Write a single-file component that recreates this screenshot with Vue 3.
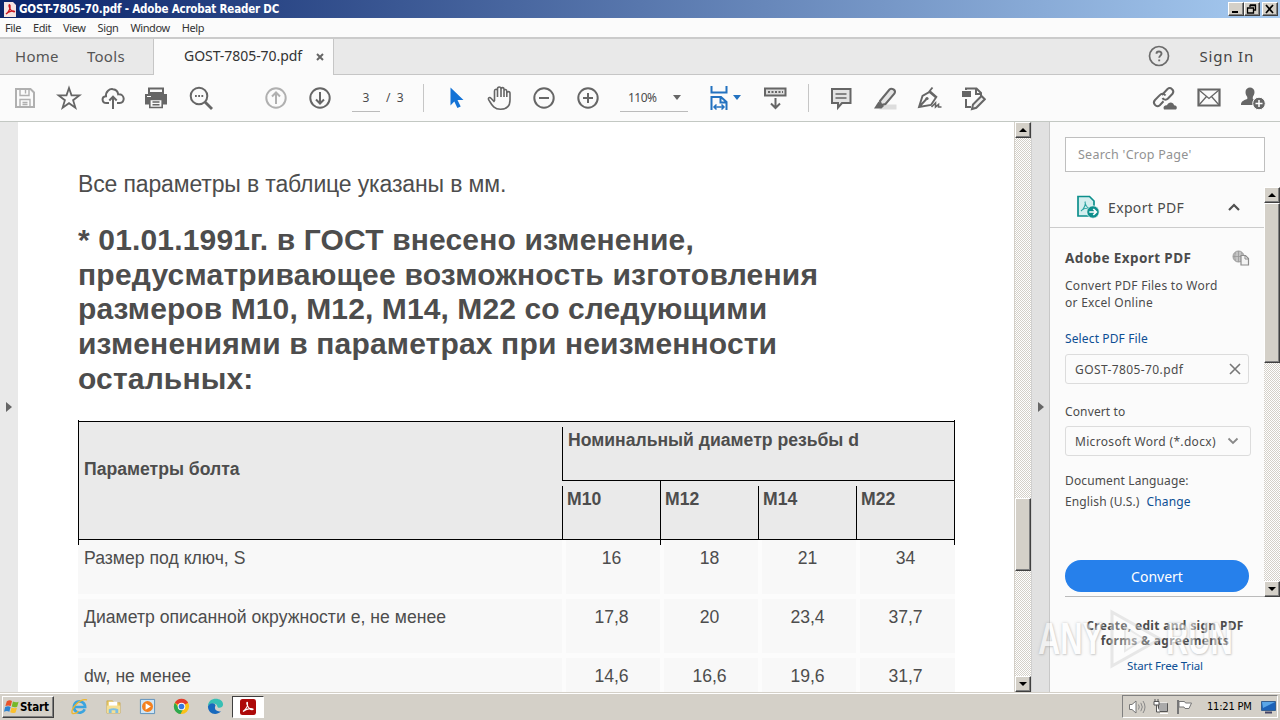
<script setup>
    import { ref } from 'vue'

    const menus = ['File', 'Edit', 'View', 'Sign', 'Window', 'Help'];
    const sizes = ['М10', 'М12', 'М14', 'М22'];
    const rows = [
        { name: 'Размер под ключ, S', values: ['16', '18', '21', '34'] },
        { name: 'Диаметр описанной окружности e, не менее', values: ['17,8', '20', '23,4', '37,7'] },
        { name: 'dw, не менее', values: ['14,6', '16,6', '19,6', '31,7'] },
    ];
    const headingLines = [
        '* 01.01.1991г. в ГОСТ внесено изменение,',
        'предусматривающее возможность изготовления',
        'размеров М10, М12, М14, М22 со следующими',
        'изменениями в параметрах при неизменности',
        'остальных:',
    ];
    const fileName = ref('GOST-7805-70.pdf');
</script>

<template>
    <div class="screen">
        <!-- title bar -->
        <header class="titlebar">
            <svg class="title-icon" width="12" height="15" viewBox="0 0 12 15">
                <path d="M0 0h9l3 3v12H0z" fill="#f4e4e2" />
                <path d="M2 12C5 10 6.500 6 6 3.500C5.500 2 4.500 3 5.300 5C6.200 8 8.500 10 10.500 9.700C11 8.500 5 8.500 2 12z" fill="none" stroke="#c8141c" stroke-width="1.300" />
            </svg>
            <span class="title-text">{{ fileName }} - Adobe Acrobat Reader DC</span>
            <div class="window-buttons">
                <button class="bevel win"><svg width="12" height="10" viewBox="0 0 12 10"><path d="M2 8h6" stroke="#000" stroke-width="2" /></svg></button>
                <button class="bevel win"><svg width="12" height="10" viewBox="0 0 12 10"><path d="M4 3V1.500h5.500V6H8M4 1h6M1.500 4h6v5h-6zM1 4h7" fill="none" stroke="#000" stroke-width="1.300" /></svg></button>
                <button class="bevel win close"><svg width="12" height="10" viewBox="0 0 12 10"><path d="M2 1l7 8M9 1L2 9" stroke="#000" stroke-width="1.700" /></svg></button>
            </div>
        </header>

        <nav class="menubar">
            <span v-for="m in menus" :key="m">{{ m }}</span>
        </nav>

        <div class="tabs">
            <div class="tabs-left">
                <span class="tab-home">Home</span>
                <span class="tab-tools">Tools</span>
            </div>
            <div class="tab-active">
                <span class="tab-name">{{ fileName }}</span>
                <svg width="8" height="8" viewBox="0 0 8 8"><path d="M1 1l6 6M7 1L1 7" stroke="#666" stroke-width="2" /></svg>
            </div>
            <div class="tabs-right">
                <svg width="22" height="22" viewBox="0 0 22 22">
                    <circle cx="11" cy="11" r="9.500" fill="none" stroke="#6b6b6b" stroke-width="1.700" />
                    <path d="M8.500 8.800C8.500 5.600 13.500 5.700 13.500 8.700C13.500 10.600 11.200 10.700 11.200 12.800M11.200 14.400v1.800" fill="none" stroke="#6b6b6b" stroke-width="1.900" />
                </svg>
                <span class="sign-in">Sign In</span>
            </div>
        </div>

        <!-- toolbar -->
        <div class="toolbar">
            <div class="tool"><svg viewBox="0 0 26 26" class="dim">
                <path d="M4 4h14.500L22 7.500V22H4z" /><path d="M8 4v6.500h9V4M13.500 5v3.500M8 22v-7.500h10V22M10.500 17.500h5M10.500 19.500h5" stroke-width="1.400" />
            </svg></div>
            <div class="tool"><svg viewBox="0 0 26 26"><path d="M13 3l2.500 7.300 7.900.1-6.300 4.800 2.300 7.500-6.400-4.500L6.600 22.700l2.300-7.500-6.300-4.800 7.900-.1z" stroke-width="1.800" /></svg></div>
            <div class="tool"><svg viewBox="0 0 26 26">
                <path d="M9 18H6.500C1.500 18 1.200 11.600 6 11.300C5.600 6.300 9.500 3.600 13 4.200C16.200 4.600 17.800 6.500 18.200 9.300C25.200 8.700 25.300 18 19.700 18H17" /><path d="M13 24V12M9.300 15.500L13 11.700l3.700 3.800" />
            </svg></div>
            <div class="tool"><svg viewBox="0 0 26 26" class="shift-left">
                <path d="M6 3.500h14V8H6z" /><path d="M2 9h22v10.500h-4V15H6v4.500H2z" fill="#666" stroke="none" /><path d="M6.800 14.500h12.400V22.500H6.800zM9.500 17h7M9.500 19.700h7" stroke-width="1.600" /><path d="M4 11.500h4" stroke="#fff" stroke-width="1" />
            </svg></div>
            <div class="tool"><svg viewBox="0 0 26 26"><circle cx="11" cy="11" r="8.300" /><path d="M17 17l7 7" stroke-width="2.800" /><path d="M7 11h1.800M10.200 11H12M13.400 11h1.800" /></svg></div>

            <div class="tool after-search"><svg viewBox="0 0 26 26" class="dim"><circle cx="13" cy="13" r="9.700" /><path d="M13 19V7.500M9 11.500l4-4 4 4" /></svg></div>
            <div class="tool"><svg viewBox="0 0 26 26"><circle cx="13" cy="13" r="9.700" /><path d="M13 7v11.500M9 14.500l4 4 4-4" /></svg></div>
            <div class="page-field">3</div>
            <div class="page-total">/&nbsp; 3</div>
            <i class="divider"></i>

            <div class="tool"><svg viewBox="0 0 26 26"><path d="M7.500 2.500l13 12.500h-6l3.200 6.600-3.300 1.400-3.100-6.500-3.800 4z" fill="#1473d6" stroke="none" /></svg></div>
            <div class="tool"><svg viewBox="0 0 26 26">
                <path d="M7.500 17L4 13.300C2.300 11.500.6 13 2 15.300C4.500 19.300 6.500 24.300 13.500 24.300C20.500 24.300 23 21 23 15V8.500C23 6 19.800 6 19.800 8.500V12M7.500 16V6C7.500 3.700 10.500 3.700 10.500 6V12M10.500 11V4C10.500 1.300 14 1.300 14 4V12M14 11V4.500C14 2 17 2 17 4.500V12M17 11V6C17 3.800 19.800 4 19.800 6.500V12" stroke-width="1.600" />
            </svg></div>
            <div class="tool"><svg viewBox="0 0 26 26"><circle cx="13" cy="13" r="9.700" /><path d="M8 13h10" /></svg></div>
            <div class="tool"><svg viewBox="0 0 26 26"><circle cx="13" cy="13" r="9.700" /><path d="M8 13h10M13 8v10" /></svg></div>
            <div class="zoom-field"><span>110%</span><i class="caret"></i></div>
            <div class="fit">
                <svg viewBox="0 0 18 26"><path d="M1.500 1v6.500h15V1M1.500 25V12h9.500l5.500 5v8M10.500 12v5.500h6" /><path d="M4 22h10M6.500 19.500L4 22l2.500 2.500M11.500 19.500L14 22l-2.500 2.500" stroke-width="1.500" /></svg>
                <i class="caret blue"></i>
            </div>
            <div class="tool after-fit"><svg viewBox="0 0 26 26"><path d="M3 3.500h20.500v7H3z" fill="#ddd" /><path d="M6 7h15" stroke-dasharray="2 1.500" stroke-width="1.800" /><path d="M13.500 13v10M9 18.500l4.500 4.500 4.500-4.500" /></svg></div>
            <i class="divider second"></i>

            <div class="tool"><svg viewBox="0 0 26 26"><path d="M4 4h18.500v14H14l-4 4.500V18H4z" fill="#e4e4e4" /><path d="M7.500 9h11M7.500 13h11" stroke-width="1.500" /></svg></div>
            <div class="tool"><svg viewBox="0 0 26 26"><path d="M12 19.500h12.500v5H7z" fill="#ddd" stroke="none" /><path d="M8 16L17.500 4.500C19.500 2.500 24.500 5 22.500 8.500L13.500 19L9 20z" fill="#e4e4e4" /><path d="M6.500 16.500l5.500 4.500-2.500 2.500H2z" fill="#666" stroke="none" /></svg></div>
            <div class="tool"><svg viewBox="0 0 26 26"><path d="M3 22L6.500 11L13.500 7L20 12.500l-5 7.500zM3 22l7.500-8M12.500 7.500L16.500 2.500M13 5.500l8 7" stroke-width="1.900" /><circle cx="11" cy="13.500" r="1.600" fill="#666" stroke="none" /><path d="M15.500 22l4-4v4l3-2.500v2.500h3" stroke-width="1.600" /></svg></div>
            <div class="tool"><svg viewBox="0 0 26 26"><path d="M6 5V3.500h10.500L21 8v3M16 3.500V9h5M6 14v8h5" /><path d="M2 6h9v6H2z" fill="#666" stroke="none" /><path d="M12 24l1-4.500 8.500-8.500 3.300 3.300-8.500 8.500z" fill="#eee" /></svg></div>

            <div class="tool share"><svg viewBox="0 0 26 26">
                <path d="M11 10l5.500-6c3-2.500 7.500 1.300 5 4.800L17 13.500c-2 2-4.500 1.200-5.500-.5M14.500 10.500c-1.500-2-4-2.200-5.700-.4L4 15c-3 3.200 1.300 8 4.800 5.300l3.700-4" /><path d="M13 24.500c-1.500-3 1-4.700 3-4.200c1.500-4 6.500-3.300 7 0c3 0 3.500 3 2 4.200z" fill="#666" stroke="none" />
            </svg></div>
            <div class="tool mail"><svg viewBox="0 0 26 26"><path d="M2.500 4.500h21v16h-21z" stroke-width="2.200" /><path d="M3 5l10 8.500L23 5M3 20l7.500-8.500M23 20l-7.500-8.500" stroke-width="1.300" /></svg></div>
            <div class="tool"><svg viewBox="0 0 26 26">
                <path d="M5.500 7C5.500 1 14.500 1 14.500 7C14.500 9.500 13.300 10.500 12.800 12V14l3 2c-2 2-2 3.500-2 4H1C1 16.500 3 15.500 7.300 14V12C6.500 10.500 5.500 9.500 5.500 7z" fill="#666" stroke="none" /><circle cx="19" cy="18.500" r="6.300" fill="#666" stroke="#fbfbfb" stroke-width="1" /><path d="M15.500 18.500h7M19 15v7" stroke="#fff" stroke-width="1.500" />
            </svg></div>
        </div>

        <main class="workspace">
            <aside class="left-strip"><i class="arrow"></i></aside>
            <section class="page">
                <p class="note">Все параметры в таблице указаны в мм.</p>
                <h2 class="heading">
                    <span v-for="(line, i) in headingLines" :key="i">{{ line }}</span>
                </h2>
                <div class="table">
                    <div class="thead">
                        <div class="param">Параметры болта</div>
                        <div class="diam">
                            <div class="diam-title"><span>Номинальный диаметр резьбы d</span></div>
                            <div class="diam-sizes">
                                <div v-for="s in sizes" :key="s"><span>{{ s }}</span></div>
                            </div>
                        </div>
                    </div>
                    <div v-for="r in rows" :key="r.name" class="trow">
                        <div class="name">{{ r.name }}</div>
                        <div v-for="(v, i) in r.values" :key="i" class="value">{{ v }}</div>
                    </div>
                    <!-- border ends which stick out of the header -->
                    <i class="tick t0"></i><i class="tick t1"></i><i class="tick t2"></i>
                </div>
            </section>
            <div class="scroll doc-scroll">
                <button class="bevel sbtn"><i class="up"></i></button>
                <div class="bevel thumb"></div>
                <button class="bevel sbtn bottom"><i class="down"></i></button>
            </div>
            <aside class="mid-strip"><i class="arrow"></i></aside>

            <aside class="panel">
                <div class="search">Search 'Crop Page'</div>
                <div class="panel-main">
                    <div class="panel-body">
                        <div class="export-head">
                            <svg width="24" height="24" viewBox="0 0 24 24">
                                <path d="M2 1.500h11.500L18 6v15H2z" fill="#d3eeee" stroke="#0d8f8c" stroke-width="1.700" />
                                <path d="M5 16C8.500 13.500 10 9 9 6.500M9 7.500C10 12 12 13.500 15 13.500M5 15.500c2.500-2 5.500-2.500 8-2.500" fill="none" stroke="#2aa3a0" stroke-width="1.100" />
                                <circle cx="17" cy="17" r="6.200" fill="#0d8f8c" stroke="#fff" stroke-width=".7" />
                                <path d="M13.300 17h6.500M17.300 14l3 3-3 3" fill="none" stroke="#fff" stroke-width="1.700" />
                            </svg>
                            <span class="export-title">Export PDF</span>
                            <svg class="chev" width="12" height="8" viewBox="0 0 12 8"><path d="M1 7l5-5 5 5" fill="none" stroke="#505050" stroke-width="2.200" /></svg>
                        </div>
                        <div class="export-body">
                            <div class="adobe-row">
                                <b>Adobe Export PDF</b>
                                <svg width="18" height="16" viewBox="0 0 18 16">
                                    <circle cx="6.500" cy="6.500" r="5.500" fill="#c4c4c4" stroke="#999" /><path d="M1 6.500h11M6.500 1v11M3.500 2.500c-1 3-1 5 0 8M9.500 2.500c1 3 1 5 0 8" fill="none" stroke="#999" stroke-width=".8" />
                                    <path d="M9 5.500h4.500l3 3V15H9z" fill="#f4f4f4" stroke="#8c8c8c" stroke-width="1.200" /><path d="M13 5.500V9h3.500" fill="none" stroke="#8c8c8c" />
                                </svg>
                            </div>
                            <p class="desc">Convert PDF Files to Word<br>or Excel Online</p>
                            <a class="select-file">Select PDF File</a>
                            <div class="file-box">
                                <span>{{ fileName }}</span>
                                <svg width="12" height="12" viewBox="0 0 12 12"><path d="M1 1l10 10M11 1L1 11" stroke="#777" stroke-width="1.600" /></svg>
                            </div>
                            <label class="convert-to">Convert to</label>
                            <div class="select-box">
                                <span>Microsoft Word (*.docx)</span>
                                <svg width="12" height="8" viewBox="0 0 12 8"><path d="M1.500 1.500L6 6l4.500-4.500" fill="none" stroke="#888" stroke-width="1.800" /></svg>
                            </div>
                            <div class="lang">Document Language:</div>
                            <div class="lang-value"><span>English (U.S.)</span><a>Change</a></div>
                            <button class="convert">Convert</button>
                        </div>
                    </div>
                    <div class="scroll panel-scroll">
                        <button class="bevel sbtn"><i class="up"></i></button>
                        <div class="bevel thumb"></div>
                        <button class="bevel sbtn bottom"><i class="down"></i></button>
                    </div>
                </div>
                <footer class="promo">
                    <b>Create, edit and sign PDF</b>
                    <b>forms &amp; agreements</b>
                    <a>Start Free Trial</a>
                </footer>
            </aside>
        </main>

        <!-- taskbar -->
        <footer class="taskbar">
            <button class="bevel start">
                <svg width="16" height="16" viewBox="0 0 17 16">
                    <path d="M3 2q3-2 5.500-.3L7.200 7Q4.500 5.600 1.500 7z" fill="#e8532a" /><path d="M9.500 2.200q3 1.500 6 .3L14 7.800q-3 1.200-5.800-.3z" fill="#76b82a" />
                    <path d="M1.200 8Q4.500 6.500 7 8L5.700 13Q3 11.500 0 13z" fill="#2d83d0" /><path d="M8 8.500q3 1.500 5.800.4l-1.500 5q-3 1.300-5.700-.2z" fill="#fbc02d" />
                </svg>
                <span>Start</span>
            </button>
            <div class="quick ie"><svg viewBox="0 0 18 18">
                <path d="M14.500 12A6 6 0 1 1 15 9.500H4" fill="none" stroke="#3ba4df" stroke-width="2.800" /><path d="M1.500 16.500C-1 12 9 0 17 2M1.500 16.500C5 17 7 15 8 14" fill="none" stroke="#efb62b" stroke-width="1.400" />
            </svg></div>
            <div class="quick"><svg viewBox="0 0 18 18">
                <path d="M2 3h6l1.500 2H16v11H2z" fill="#e9c963" stroke="#bf9b3d" stroke-width=".6" /><path d="M4 4h9v7H4z" fill="#fff" /><path d="M2 8h14v8H2z" fill="#f5df94" /><path d="M4 16v-4q5-2.500 10 0v4h-3v-3H7v3z" fill="#7dbfe3" />
            </svg></div>
            <div class="quick"><svg viewBox="0 0 18 18">
                <path d="M1.500 1.500h15v15h-15z" fill="#cfe5f5" stroke="#5a8fbb" /><circle cx="9" cy="9" r="5.800" fill="#f4801e" /><path d="M7 5.500L12.500 9 7 12.500z" fill="#fff" />
            </svg></div>
            <div class="quick"><svg viewBox="0 0 18 18">
                <circle cx="9" cy="9" r="8" fill="#fbc116" /><path d="M9 9L2 5A8 8 0 0 1 16 5z" fill="#e33b2e" /><path d="M2 5A8 8 0 0 0 8 17l3-6-5-1z" fill="#2da94f" /><circle cx="9" cy="9" r="4" fill="#fff" /><circle cx="9" cy="9" r="3" fill="#3778e0" />
            </svg></div>
            <div class="quick"><svg viewBox="0 0 18 18">
                <path d="M1 9C1 -2 17-1 17 7C17 11 11 11 11 9C11 6 4 4 1 9z" fill="#37bfb4" /><path d="M1 9C3 4 9 5 9 8C7 12 10 15 15 14C9 20 1 16 1 9z" fill="#1769bd" />
            </svg></div>
            <div class="running"><svg width="18" height="18" viewBox="0 0 18 18">
                <rect x="1" y="1" width="16" height="16" rx="2.500" fill="#ad0909" /><path d="M4 13.500C7.500 11 9 7 8.500 4.500C8 3.500 7.300 5 8.200 7C9.500 10 12 12 14 11.500C14.500 10 8 10 4 13.500z" fill="none" stroke="#fff" stroke-width="1.100" />
            </svg></div>
            <div class="tray">
                <svg width="18" height="16" viewBox="0 0 18 16"><path d="M1.500 5.500H4L8 2v12l-4-3.500H1.500z" fill="#fff" stroke="#777" /><path d="M10.500 5.500q1.500 2.500 0 5M12.800 3.800q3 4.200 0 8.400M15 2q4 6 0 12" fill="none" stroke="#888" /></svg>
                <svg width="16" height="16" viewBox="0 0 16 16"><path d="M5.500 4.500h9v8h-9z" fill="#aaa" stroke="#555" /><path d="M6 4h8M7 14.500h8" stroke="#fff" /><path d="M1 2.500h5V6H1zM2 0v2.500M5 0v2.500M3.500 6v7H7" fill="#fff" stroke="#555" /></svg>
                <svg width="17" height="16" viewBox="0 0 17 16"><path d="M2 1v14" stroke="#777" stroke-width="2" /><path d="M3 2.500h5.500l1 1.500h6l-2.500 5.500H9L8 8H3z" fill="#fff" stroke="#777" /></svg>
                <span class="clock">11:21 PM</span>
                <svg width="17" height="14" viewBox="0 0 17 14"><path d="M1.500 1.500h14v9h-14z" fill="#1c62b8" stroke="#355f91" /><path d="M2 2h13L3 8z" fill="#5aa6e8" /><path d="M5 12.500h7" stroke="#446" stroke-width="2" /></svg>
            </div>
        </footer>

        <div class="watermark">
            <div class="word"><span>ANY</span></div>
            <svg width="58" height="64" viewBox="0 0 58 64"><path d="M4 5L52 32 4 59z" fill="#fff" fill-opacity=".5" stroke="#d4d4d4" stroke-width="3" /><path d="M17 20L36 32 17 44z" fill="#f7f7f7" stroke="#d8d8d8" stroke-width="2" /></svg>
            <div class="word"><span>RUN</span></div>
        </div>
    </div>
</template>

<style>
    body {
        margin: 0;
        overflow: hidden;
    }
</style>

<style scoped>
    .screen {
        position: relative;
        display: flex;
        flex-direction: column;
        width: 1280px;
        height: 720px;
        overflow: hidden;
        background: #fbfbfb;
        color: #4b4b4b;
        font-family: "Noto Sans", "Open Sans", sans-serif;
        white-space: nowrap;
    }

    .screen * {
        box-sizing: border-box;
    }

    button {
        margin: 0;
        padding: 0;
        border: none;
        font-family: inherit;
    }

    .bevel {
        background: #d4d0c8;
        border: 1px solid;
        border-color: #fff #404040 #404040 #fff;
        box-shadow: inset -1px -1px 0 #808080;
    }

    /* タイトルバー */
    .titlebar {
        display: flex;
        align-items: center;
        flex: none;
        height: 18px;
        padding: 0 2px 0 4px;
        background: linear-gradient(90deg, #0a246a, #a6caf0);
    }

    .title-text {
        margin-left: 3px;
        color: #fff;
        font: bold 11.5px/18px "DejaVu Sans Condensed", "DejaVu Sans", sans-serif;
        letter-spacing: -0.18px;
    }

    .window-buttons {
        display: flex;
        margin-left: auto;
    }

    .win {
        display: flex;
        align-items: center;
        justify-content: center;
        width: 16px;
        height: 14px;
    }

    .win.close {
        margin-left: 2px;
    }

    .menubar {
        display: flex;
        flex: none;
        height: 21px;
        padding-left: 5px;
        border-bottom: 2px solid #cbcbcb;
        font: 11px/20px "Noto Sans", sans-serif;
        letter-spacing: -0.4px;
        color: #333;
    }

    .menubar span { margin-right: 12px; }

    /* タブ */
    .tabs {
        display: flex;
        flex: none;
        height: 36px;
        background: #e9e9e9;
        font-size: 15px;
    }

    .tabs-left {
        display: flex;
        width: 154px;
        padding-left: 15px;
        border-right: 1px solid #c6c6c6;
        border-bottom: 1px solid #c6c6c6;
        line-height: 35px;
        letter-spacing: 0.3px;
        color: #555;
    }

    .tab-tools { margin-left: 28px; }

    .tab-active {
        display: flex;
        align-items: center;
        width: 180px;
        padding-left: 30px;
        background: #fbfbfb;
        border-right: 1px solid #c6c6c6;
        font-size: 14px;
        line-height: 34px;
        letter-spacing: -0.05px;
        color: #333;
    }

    .tab-name { padding-bottom: 2px; }

    .tab-active svg { margin-left: 14px; }

    .tabs-right {
        display: flex;
        flex: 1;
        align-items: center;
        justify-content: flex-end;
        padding: 0 26px 1px 0;
        border-bottom: 1px solid #c6c6c6;
        color: #444;
    }

    .sign-in {
        margin-left: 30px;
        letter-spacing: 0.8px;
    }

    /* ツールバー */
    .toolbar {
        display: flex;
        align-items: center;
        flex: none;
        height: 47px;
        padding: 0 5px 1px 3px;
        border-bottom: 1px solid #c3c8c3;
    }

    .tool {
        display: flex;
        justify-content: center;
        flex: none;
        width: 44px;
    }

    .toolbar svg {
        width: 26px;
        height: 26px;
        fill: none;
        stroke: #666;
        stroke-width: 2;
    }

    .toolbar svg.dim { stroke: #b0b0b0; }
    .toolbar svg.shift-left { margin-right: 2px; }

    .after-search { margin-left: 31px; }

    .page-field {
        width: 28px;
        height: 28px;
        margin-left: 10px;
        border-bottom: 1px solid #bbb;
        font-size: 12px;
        line-height: 28px;
        text-align: center;
    }

    .page-total {
        width: 37px;
        padding-left: 6px;
        font-size: 12px;
        line-height: 28px;
    }

    .divider {
        width: 1px;
        height: 28px;
        margin: 0 10px 0 6px;
        background: #c6c6c6;
    }

    .divider.second { margin: 0 10px 0 11px; }

    .zoom-field {
        display: flex;
        align-items: center;
        justify-content: space-between;
        width: 68px;
        height: 28px;
        margin-left: 10px;
        padding: 0 7px 0 8px;
        border-bottom: 1px solid #bbb;
        font-size: 12px;
        letter-spacing: -0.5px;
    }

    .caret {
        border: 4px solid transparent;
        border-top: 5px solid #666;
        border-bottom: 0;
    }

    .caret.blue { border-top-color: #2372c0; }

    .fit {
        display: flex;
        align-items: center;
        width: 43px;
        margin-left: 22px;
    }

    .fit svg {
        width: 18px;
        margin-right: 5px;
        stroke: #2372c0;
    }

    .share { margin-left: auto; }
    .mail { margin: 0 0 0 1px; }

    /* ドキュメント */
    .workspace {
        display: flex;
        flex: none;
        height: 570px;
    }

    .left-strip,
    .mid-strip {
        display: flex;
        align-items: center;
        flex: none;
        width: 18px;
        padding-left: 6px;
        background: #e9e9e9;
    }

    .mid-strip {
        width: 19px;
        background: #e1e1e1;
        border-right: 1px solid #c8c8c8;
        border-left: 1px solid #d0d0d0;
    }

    .arrow {
        border: 5px solid transparent;
        border-left: 6px solid #666;
        border-right: 0;
    }

    .page {
        flex: none;
        width: 996px;
        padding: 48px 0 0 60px;
        overflow: hidden;
        background: #fff;
        color: #4d4d4d;
        font-family: "Liberation Sans", Arial, sans-serif;
    }

    .note {
        margin: 0;
        font-size: 23px;
        line-height: 28px;
        letter-spacing: -0.14px;
    }

    .heading {
        display: flex;
        flex-direction: column;
        margin: 25px 0 0;
        font-size: 30px;
        line-height: 34.7px;
        letter-spacing: 0.16px;
    }

    .heading span:nth-child(2) { letter-spacing: 0.22px; }
    .heading span:nth-child(3) { letter-spacing: 0.1px; }

    .table {
        position: relative;
        width: 877px;
        margin-top: 24px;
        font-size: 17.6px;
        line-height: 20px;
    }

    .thead {
        display: flex;
        height: 119px;
        border: 1px solid #000;
        background: #eaeaea;
        font-weight: bold;
    }

    .param {
        width: 483px;
        padding: 37px 0 0 5px;
    }

    .diam { width: 392px; }

    .diam-title {
        height: 59px;
        padding-top: 5px;
        border-bottom: 1px solid #000;
    }

    .diam-title span,
    .diam-sizes span {
        display: block;
        height: 53px;
        padding: 3px 0 0 5px;
        border-left: 1px solid #000;
    }

    .diam-sizes { display: flex; }

    .diam-sizes span { padding-left: 4px; }

    .diam-sizes div {
        width: 98px;
        padding-top: 5px;
    }

    .trow {
        display: flex;
        height: 59px;
        border-bottom: 5px solid #fcfcfc;
        background: #f8f8f8;
    }

    .trow .name {
        width: 484px;
        padding: 8px 0 0 6px;
        letter-spacing: 0.02px;
    }

    .trow .value {
        width: 98px;
        padding: 8px 3px 0 0;
        border-left: 4px solid #fcfcfc;
        text-align: center;
    }

    .tick {
        position: absolute;
        top: -1px;
        width: 1px;
        height: 125px;
        background: #000;
    }

    .t0 { left: 0; }

    .t1 {
        top: 60px;
        left: 582px;
        height: 64px;
    }

    .t2 { right: 0; }

    /* スクロールバー */
    .scroll {
        display: flex;
        flex-direction: column;
        flex: none;
        width: 17px;
        background: repeating-conic-gradient(#d4d0c8 0 25%, #fff 0 50%) 0 0 / 2px 2px;
    }

    .sbtn {
        display: flex;
        align-items: center;
        justify-content: center;
        flex: none;
        height: 16px;
    }

    .sbtn.bottom { margin-top: auto; }

    .up,
    .down {
        border: 4px solid transparent;
        border-top: 0;
        border-bottom: 4px solid #000;
    }

    .down {
        border-top: 4px solid #000;
        border-bottom: 0;
    }

    .doc-scroll { border-left: 1px solid #d4d0c8; }

    .doc-scroll .thumb {
        height: 73px;
        margin-top: 360px;
    }

    .panel-scroll { width: 16px; }
    .panel-scroll .thumb { height: 160px; }

    /* 右パネル */
    .panel {
        display: flex;
        flex-direction: column;
        width: 230px;
        font-size: 12px;
    }

    .search {
        flex: none;
        width: 200px;
        height: 35px;
        margin: 15px 0 15px 15px;
        padding-left: 12px;
        border: 1px solid #bfbfbf;
        background: #fff;
        color: #929292;
        font-size: 12.5px;
        line-height: 34px;
        letter-spacing: 0.25px;
    }

    .panel-main {
        display: flex;
        flex: none;
        height: 410px;
    }

    .panel-body { width: 214px; }

    .export-head {
        display: flex;
        align-items: center;
        height: 41px;
        padding: 0 24px 0 26px;
        border-bottom: 1px solid #ccc;
    }

    .export-title {
        margin-left: 8px;
        font-size: 14px;
        letter-spacing: 0.35px;
    }

    .chev { margin-left: auto; }

    .export-body {
        display: flex;
        flex-direction: column;
        height: 369px;
        margin-left: 15px;
        padding-top: 20px;
        border-bottom: 1px solid #bbb;
        letter-spacing: 0.13px;
    }

    .adobe-row {
        display: flex;
        align-items: center;
        justify-content: space-between;
        height: 20px;
        padding-right: 14px;
        font-size: 13.5px;
        letter-spacing: 0.4px;
    }

    .desc {
        margin: 9px 0 0;
        line-height: 17px;
        letter-spacing: 0.27px;
    }

    .panel a { color: #0d4f94; }

    .select-file {
        margin-top: 18px;
        line-height: 20px;
    }

    .file-box,
    .select-box {
        display: flex;
        align-items: center;
        justify-content: space-between;
        flex: none;
        width: 184px;
        height: 30px;
        margin-top: 5px;
        padding: 0 7px 0 9px;
        border: 1px solid #dcdcdc;
        border-radius: 3px;
        letter-spacing: 0.4px;
    }

    .convert-to {
        margin-top: 18px;
        line-height: 20px;
    }

    .select-box {
        width: 186px;
        margin-top: 4px;
        padding-right: 11px;
        letter-spacing: 0.32px;
    }

    .lang {
        margin-top: 15px;
        line-height: 20px;
    }

    .lang-value {
        display: flex;
        gap: 7px;
        margin-top: 1px;
        line-height: 20px;
    }

    .convert {
        flex: none;
        width: 184px;
        height: 32px;
        margin-top: 48px;
        border-radius: 16px;
        background: #2680eb;
        color: #fff;
        font-size: 14px;
    }

    .promo {
        display: flex;
        flex-direction: column;
        align-items: center;
        padding: 21px 0 0;
        line-height: 15px;
        letter-spacing: 0.32px;
    }

    .promo a {
        margin-top: 10px;
        font-size: 11.5px;
        letter-spacing: -0.15px;
    }

    /* タスクバー */
    .taskbar {
        display: flex;
        align-items: center;
        flex: none;
        height: 28px;
        padding: 3px 2px 2px;
        background: linear-gradient(#d4d0c8 1px, #fff 1px, #fff 2px, #d4d0c8 2px);
        color: #000;
    }

    .start {
        display: flex;
        align-items: center;
        width: 52px;
        height: 22px;
        padding-left: 1px;
        font: bold 11.5px "DejaVu Sans Condensed", "DejaVu Sans", sans-serif;
        letter-spacing: -0.1px;
    }

    .quick {
        display: flex;
        justify-content: center;
        width: 34px;
    }

    .quick.ie { margin-left: 8px; }

    .quick svg {
        width: 17px;
        height: 17px;
    }

    .running {
        display: flex;
        align-items: center;
        justify-content: center;
        width: 32px;
        height: 22px;
        border: 1px solid;
        border-color: #404040 #fff #fff #404040;
        background: #fff;
    }

    .tray {
        display: flex;
        align-items: center;
        width: 156px;
        height: 23px;
        margin-left: auto;
        padding-left: 5px;
        border: 1px solid;
        border-color: #808080 #fff #fff #808080;
    }

    .tray svg + svg { margin-left: 7px; }

    .clock {
        margin: 0 8px 0 14px;
        font: 11px "DejaVu Sans Condensed", "DejaVu Sans", sans-serif;
        letter-spacing: -0.2px;
    }

    .watermark {
        position: absolute;
        top: 606px;
        left: 1038px;
        display: flex;
        align-items: center;
        height: 66px;
        opacity: 0.5;
        color: #fff;
        font: bold 44px "Liberation Sans", Arial, sans-serif;
        text-shadow: 0 0 3px #999, 1px 1px 2px #aaa;
    }

    .word { width: 70px; }

    .word span {
        display: inline-block;
        transform: scaleX(0.7);
        transform-origin: left center;
    }
</style>
